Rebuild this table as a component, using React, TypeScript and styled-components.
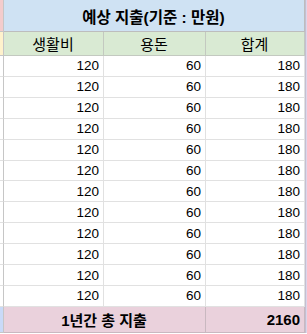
import { FunctionComponent } from 'react';
import styled, { createGlobalStyle } from 'styled-components';

const GlobalStyle = createGlobalStyle`
  html, body {
    margin: 0;
    padding: 0;
    background: #ffffff;
  }
  body {
    font-family: 'Liberation Sans', 'Noto Sans CJK KR', sans-serif;
    color: #000000;
  }
`;

type Tone = 'title' | 'header' | 'data' | 'total';

const stripColors: Record<Tone, string> = {
  title: '#f4cccc',
  header: '#fff2cc',
  data: '#ffffff',
  total: '#c9daf8',
};

const rowColors: Record<Tone, string> = {
  title: '#cfe2f3',
  header: '#d9ead3',
  data: '#ffffff',
  total: '#ead1dc',
};

const lineColors: Record<Tone, string> = {
  title: '#bdbdbd',
  header: '#c3c9c0',
  data: '#e1e1e1',
  total: '#c9b8c0',
};

const fontSizes: Record<Tone, string> = {
  title: '15.5px',
  header: '15px',
  data: '13.5px',
  total: '15px',
};

const Sheet = styled.div`
  display: grid;
  grid-template-columns: 4px 100px 102px 99px 2px;
  grid-template-rows: 32px 24px repeat(12, 20.92px) 26px;
  width: 307px;
`;

const Cell = styled.div<{ $tone: Tone; $align?: 'left' | 'center' | 'right'; $span?: number }>`
  box-sizing: border-box;
  display: flex;
  align-items: center;
  justify-content: ${({ $align }) =>
    $align === 'right' ? 'flex-end' : $align === 'left' ? 'flex-start' : 'center'};
  grid-column: span ${({ $span }) => $span ?? 1};
  background: ${({ $tone }) => rowColors[$tone]};
  border-right: 1px solid ${({ $tone }) => lineColors[$tone]};
  border-bottom: 1px solid ${({ $tone }) => lineColors[$tone]};
  padding: 0 4px 0 3px;
  white-space: nowrap;
  overflow: hidden;
  font-size: ${({ $tone }) => fontSizes[$tone]};
  font-weight: ${({ $tone }) => ($tone === 'title' || $tone === 'total' ? 700 : 400)};
`;

const Strip = styled.div<{ $tone: Tone }>`
  box-sizing: border-box;
  background: ${({ $tone }) => stripColors[$tone]};
  border-right: 1px solid #c6c6c6;
  border-bottom: 1px solid ${({ $tone }) => ($tone === 'data' ? '#e1e1e1' : '#c6c6c6')};
`;

const Edge = styled.div`
  box-sizing: border-box;
  background: #dcd6ea;
  border-left: 1px solid #c4bfd2;
`;

const rows = Array.from({ length: 12 }, () => ({ living: 120, allowance: 60 }));

type RowProps = { living: number; allowance: number };

const Row: FunctionComponent<RowProps> = ({ living, allowance }): JSX.Element => (
  <>
    <Strip $tone="data" />
    <Cell $tone="data" $align="right">
      {living}
    </Cell>
    <Cell $tone="data" $align="right">
      {allowance}
    </Cell>
    <Cell $tone="data" $align="right">
      {living + allowance}
    </Cell>
    <Edge />
  </>
);

const App: FunctionComponent = (): JSX.Element => {
  const total = rows.reduce((sum, r) => sum + r.living + r.allowance, 0);

  return (
    <>
      <GlobalStyle />
      <Sheet>
        <Strip $tone="title" />
        <Cell $tone="title" $span={3}>
          예상 지출(기준 : 만원)
        </Cell>
        <Edge />

        <Strip $tone="header" />
        <Cell $tone="header">생활비</Cell>
        <Cell $tone="header">용돈</Cell>
        <Cell $tone="header">합계</Cell>
        <Edge />

        {rows.map((r, i) => (
          <Row key={i} living={r.living} allowance={r.allowance} />
        ))}

        <Strip $tone="total" />
        <Cell $tone="total" $span={2}>
          1년간 총 지출
        </Cell>
        <Cell $tone="total" $align="right">
          {total}
        </Cell>
        <Edge />
      </Sheet>
    </>
  );
};

export default App;
